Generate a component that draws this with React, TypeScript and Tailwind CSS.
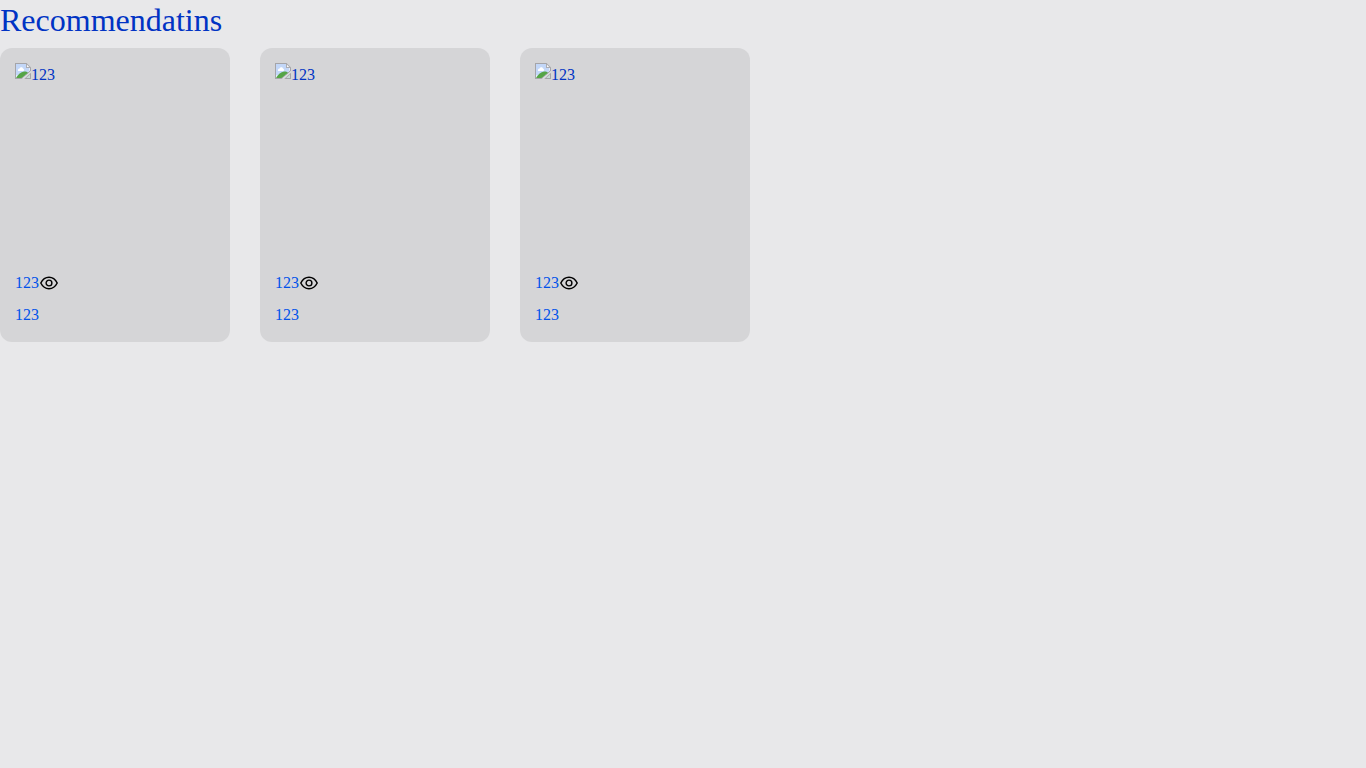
function BrokenPicture() {
  return (
    <svg width="16" height="16" viewBox="0 0 16 16" className="block shrink-0">
      <path d="M0 0H11.5L16 4.5V8L6.5 16H0Z" fill="#a5a5a9" />
      <path d="M1 1H11V5H15V7.5L6 15H1Z" fill="#e6eefa" />
      <path d="M1 1H11V5H14V8L10 12H1Z" fill="#c3d7f8" />
      <path d="M3 8C2.6 6.2 4 5.6 4.7 5.6C5.2 3.8 7.5 3.8 8 5.6C9.4 5.6 9.5 8 8.4 8Z" fill="#ffffff" />
      <path d="M1 15C3 11.5 6 9 9 8.6C10.6 8.4 12 9 13 9.8L6.5 15Z" fill="#55a546" />
      <path d="M11.5 0.8V4.5H15.2Z" fill="#fafafa" stroke="#a5a5a9" strokeWidth="0.8" />
      <path d="M16 8.5L8 15.5" stroke="#dfe2e4" strokeWidth="0.9" />
      <path d="M16 9.8V16H9.3Z" fill="#a5a5a9" />
      <path d="M15 11.4V15H11.2Z" fill="#c9dbd6" />
    </svg>
  );
}

function Eye() {
  return (
    <svg width="20" height="20" viewBox="0 0 20 20" fill="none" stroke="#000000" strokeWidth="1.5" className="block shrink-0">
      <path d="M1.8 10C3.6 6.4 6.4 4.3 10 4.3S16.4 6.4 18.2 10C16.4 13.6 13.6 15.7 10 15.7S3.6 13.6 1.8 10Z" strokeLinejoin="round" />
      <circle cx="10" cy="10" r="2.9" strokeWidth="1.4" />
    </svg>
  );
}

function Card() {
  return (
    <article className="h-[294px] w-[230px] rounded-xl bg-[#d5d5d7] p-[15px] text-base text-[#0052ea]">
      <div className="flex h-[200px] text-[#0033c4]">
        <BrokenPicture />
        <span className="leading-6">123</span>
      </div>
      <div className="mt-2 flex h-6 items-center">
        <span>123</span>
        <Eye />
      </div>
      <div className="mt-2 leading-6">123</div>
    </article>
  );
}

export default function App() {
  return (
    <main className="min-h-screen bg-[#e8e8ea] font-['Liberation_Serif',serif]">
      <h1 className="h-12 text-[32px] leading-10 text-[#0033c4]">Recommendatins</h1>
      <section className="flex gap-[30px]">
        <Card />
        <Card />
        <Card />
      </section>
    </main>
  );
}
